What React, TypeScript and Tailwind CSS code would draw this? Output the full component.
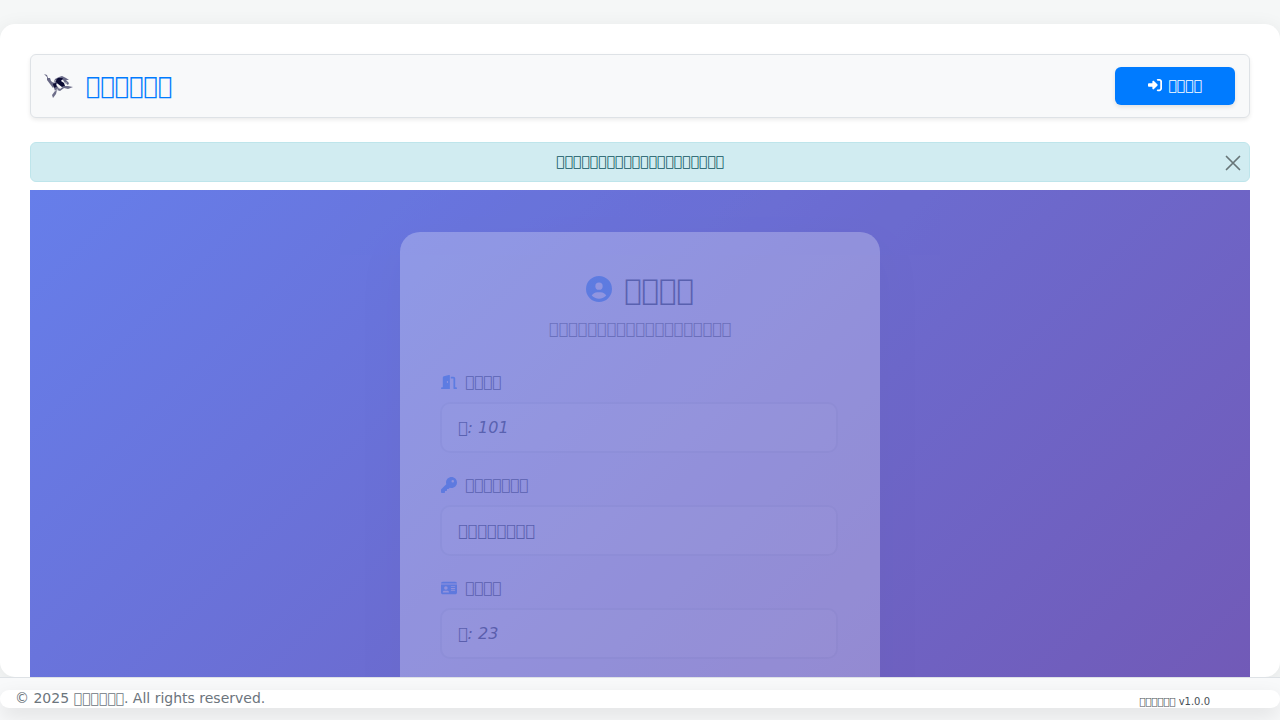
import type { ReactNode } from "react";
import {
  FaRightToBracket,
  FaCircleUser,
  FaDoorOpen,
  FaKey,
  FaIdCard,
} from "react-icons/fa6";

// Character without a glyph; the font draws its empty box for it.
const box = (count: number) => "\uE800".repeat(count);

function Logo() {
  return (
    <svg viewBox="0 0 30 30" className="size-[30px]" aria-hidden="true">
      <path d="M0 3 L3 4 L4 7 L6 7 L7 10 L11 13 L9 17 L6 13 L3 9 L3 6 Z" fill="#2b2b52" opacity=".7" />
      <path d="M9 13 L11 8 L15 6 L18 5 L22 7 L25 9 L22 9 L25 12 L24 14 L21 12 L19 9 L16 9 L13 13 Z" fill="#3a3a60" opacity=".75" />
      <path d="M11 10 L14 7 L19 7 L17 10 L20 12 L21 15 L18 16 L14 13 Z M9 13 L12 12 L13 16 L10 17 Z" fill="#0c0c34" />
      <path d="M10 17 L13 15 L16 18 L20 15 L24 15 L29 16 L24 18 L20 17 L16 20 L13 19 L12 23 L9 27 L8 24 L11 20 Z" fill="#33335a" opacity=".7" />
      <path d="M12 9 L10 12 M22 11 L22 14 M14 17 L17 16 M11 20 L14 18" fill="none" stroke="#f8f9fa" strokeWidth=".6" />
    </svg>
  );
}

function Field({
  id,
  icon,
  label,
  placeholder,
}: {
  id: string;
  icon: ReactNode;
  label: string;
  placeholder: string;
}) {
  return (
    <div className="mb-5 pr-0.5">
      <label
        htmlFor={id}
        className="mb-2 flex h-6 items-center gap-2 pl-px text-[15px] leading-6 text-[#2c3e50]"
      >
        <span className="text-base text-[#007bff]/75">{icon}</span>
        {label}
      </label>
      <input
        id={id}
        type="text"
        placeholder={placeholder}
        className="block h-[51px] w-full rounded-[10px] border-2 border-[#e9ecef] bg-white px-4 text-base italic text-[#2c3e50] placeholder:text-[#2c3e50]"
      />
    </div>
  );
}

export default function App() {
  return (
    <div className="flex h-screen flex-col overflow-hidden bg-[#f5f7f7] pt-6 font-['DejaVu_Sans',sans-serif]">
      <div className="min-h-0 flex-1 overflow-hidden rounded-[15px] bg-white px-[30px] pt-[30px] shadow-[0_4px_20px_rgba(0,0,0,0.08)]">
        <header className="flex h-16 items-center justify-between rounded-md border border-[#dee2e6] bg-[#f8f9fa] pr-[14px] pl-[13px] shadow-[0_2px_4px_rgba(0,0,0,0.08)]">
          <div className="flex items-center gap-3">
            <Logo />
            <h1 className="text-2xl text-[#007bff]">{box(6)}</h1>
          </div>
          <button
            type="button"
            className="flex h-[38px] w-[120px] items-center justify-center gap-1.5 rounded-md bg-[#007bff] pb-0.5 text-sm text-white shadow-[0_2px_4px_rgba(0,0,0,0.1)]"
          >
            <FaRightToBracket />
            {box(4)}
          </button>
        </header>

        <div
          role="alert"
          className="mt-6 flex h-10 items-center rounded-md border border-[#bee5eb] bg-[#d1ecf1] pr-2 pl-6 text-sm text-[#0c5460]"
        >
          <p className="flex-1 pb-0.5 text-center">{box(20)}</p>
          <button type="button" aria-label="Close" className="pt-0.5 opacity-50">
            <svg viewBox="0 0 16 16" className="size-4" fill="none" stroke="#000" strokeWidth="1.700" strokeLinecap="round">
              <path d="M1.500 1.500 L14.500 14.500 M14.500 1.500 L1.500 14.500" />
            </svg>
          </button>
        </div>

        <main className="mt-2 flex min-h-[1200px] items-start justify-center bg-[linear-gradient(135deg,#667eea_0%,#764ba2_100%)] px-5 pt-[42px] pb-10">
          <form className="w-full max-w-[480px] rounded-[20px] bg-white/95 px-10 pt-[41px] pb-10 opacity-[.27] shadow-[0_20px_40px_rgba(0,0,0,0.1)]">
            <div className="mb-[29px] text-center">
              <h2 className="flex h-9 items-center justify-center gap-3 text-[29px] text-[#2c3e50]">
                <FaCircleUser className="mb-1 size-[26px] text-[#007bff]/75" />
                {box(4)}
              </h2>
              <p className="mt-2 text-base text-[#6c757d]">{box(19)}</p>
            </div>
            <Field id="room" icon={<FaDoorOpen />} label={box(4)} placeholder={`${box(1)}: 101`} />
            <Field id="key" icon={<FaKey />} label={box(7)} placeholder={box(8)} />
            <Field id="number" icon={<FaIdCard />} label={box(4)} placeholder={`${box(1)}: 23`} />
          </form>
        </main>
      </div>

      <footer className="h-[43px] shrink-0 border-t border-[#dee2e6] bg-[#f8f9fa] pt-3">
        <div className="flex h-[18px] items-center justify-between rounded-[15px] bg-white pr-[70px] pl-[15px] text-[#6c757d] shadow-[0_8px_20px_rgba(0,0,0,0.1)]">
          <span className="pb-0.5 text-sm leading-4">© 2025 {box(6)}. All rights reserved.</span>
          <span className="pt-1.5 text-[10px] leading-[18px] text-[#495057]">{box(6)} v1.0.0</span>
        </div>
      </footer>
    </div>
  );
}
